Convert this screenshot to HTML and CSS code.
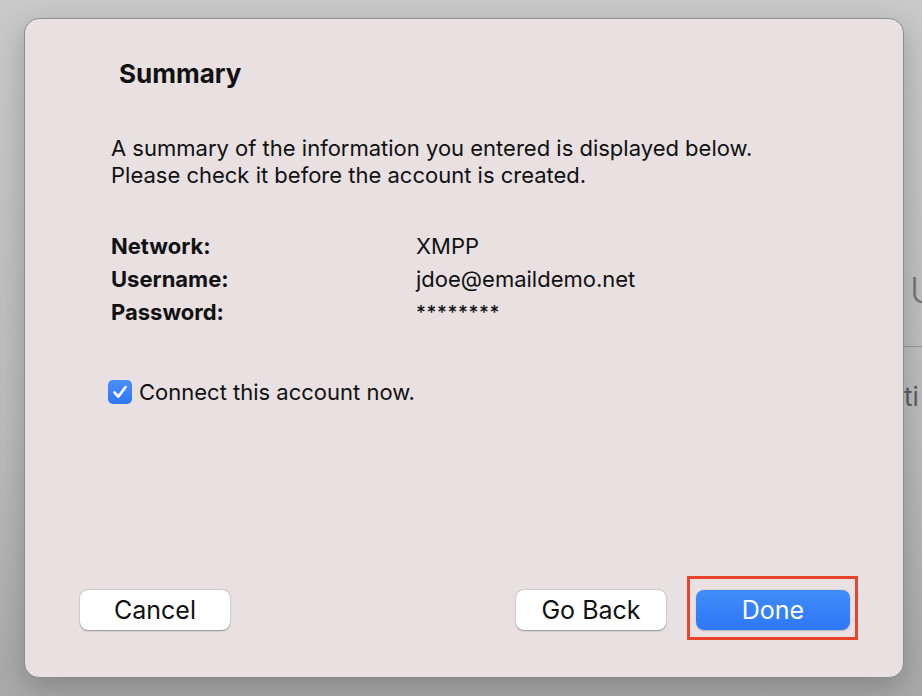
FILE: index.html
```html
<!DOCTYPE html>
<html>
<head>
<meta charset="utf-8">
<link rel="stylesheet" href="styles.css">
</head>
<body>
<div class="backdrop">
  <div class="behind">
    <div class="behind-big">U</div>
    <div class="behind-rule"></div>
    <div class="behind-small">ti</div>
  </div>
</div>
<div class="sheet">
  <div class="content">
    <h1 class="title">Summary</h1>
    <p class="intro">A summary of the information you entered is displayed below.<br>Please check it before the account is created.</p>
    <div class="details">
      <div class="label">Network:</div><div class="value">XMPP</div>
      <div class="label">Username:</div><div class="value">jdoe@emaildemo.net</div>
      <div class="label">Password:</div><div class="value stars">********</div>
    </div>
    <label class="check">
      <span class="box"><svg width="24" height="24" viewBox="0 0 24 24"><path d="M6.5 12.5 L10.3 16.6 L17.6 7" fill="none" stroke="#fff" stroke-width="2.6" stroke-linecap="round" stroke-linejoin="round"/></svg></span>
      <span class="check-text">Connect this account now.</span>
    </label>
  </div>
  <div class="buttons">
    <button class="btn">Cancel</button>
    <div class="spacer"></div>
    <button class="btn">Go Back</button>
    <div class="highlight"><button class="btn primary">Done</button></div>
  </div>
</div>
</body>
</html>
```
FILE: styles.css
```css
html, body {
  margin: 0;
  padding: 0;
}
body {
  width: 922px;
  height: 696px;
  overflow: hidden;
  position: relative;
  font-family: Inter, "Noto Sans", "Liberation Sans", sans-serif;
  background: linear-gradient(to bottom, #c9c9c9 0%, #bcbcbc 60%, #a9a9a9 100%);
}
.backdrop {
  height: 696px;
  display: flex;
  justify-content: flex-end;
}
.behind {
  width: 18px;
  overflow: hidden;
  padding-top: 266px;
  color: #757575;
}
.behind-big {
  font-size: 36px;
  font-weight: 300;
  line-height: 48px;
  padding-left: 6px;
}
.behind-rule {
  margin-top: 32px;
  height: 1px;
  background: #9a9a9a;
}
.behind-small {
  margin-top: 34px;
  font-size: 26px;
  line-height: 32px;
  color: #5e5e5e;
  margin-left: 0;
  white-space: nowrap;
}
.sheet {
  position: absolute;
  left: 24px;
  top: 18px;
  width: 880px;
  height: 660px;
  box-sizing: border-box;
  background: #e8e0e1;
  border: 1px solid #8d8d8d;
  border-radius: 15px;
  box-shadow: 0 10px 30px rgba(0,0,0,0.22);
  display: flex;
  flex-direction: column;
}
.content {
  flex: 1;
  padding: 0 0 0 86px;
}
.title {
  margin: 39px 0 0 8px;
  font-size: 26px;
  font-weight: 700;
  line-height: 32px;
  color: #111;
}
.intro {
  margin: 45px 0 0 0;
  font-size: 22px;
  line-height: 27px;
  color: #111;
}
.details {
  margin-top: 44px;
  display: grid;
  grid-template-columns: 305px auto;
  row-gap: 6px;
  font-size: 22px;
  line-height: 27px;
  color: #111;
}
.label {
  font-weight: 700;
}
.stars {
  font-size: 19px;
  font-weight: 500;
  letter-spacing: 0.6px;
}
.check {
  margin: 53px 0 0 -3px;
  display: flex;
  align-items: center;
  gap: 7px;
  font-size: 22px;
  color: #111;
}
.box {
  width: 24px;
  height: 24px;
  border-radius: 5px;
  background: linear-gradient(to bottom, #4a8ffa, #2f76f3);
  display: flex;
}
.buttons {
  display: flex;
  align-items: flex-end;
  padding: 0 0 47px 55px;
}
.spacer {
  flex: 1;
}
.btn {
  width: 150px;
  height: 40px;
  border: none;
  border-radius: 8px;
  background: #ffffff;
  box-shadow: 0 0.5px 1.5px rgba(0,0,0,0.35), 0 0 0 0.5px rgba(0,0,0,0.06);
  font-family: Inter, "Noto Sans", "Liberation Sans", sans-serif;
  font-size: 25px;
  color: #111;
  padding: 0;
}
.highlight {
  margin: 0 45px -10px 21px;
  border: 3px solid #e8432b;
  padding: 11px 5px 7px 6px;
  display: flex;
}
.primary {
  width: 154px;
  background: linear-gradient(to bottom, #3f8dfb, #2f77f5);
  color: #fff;
  box-shadow: 0 0.5px 1.5px rgba(0,0,0,0.2);
}
```
